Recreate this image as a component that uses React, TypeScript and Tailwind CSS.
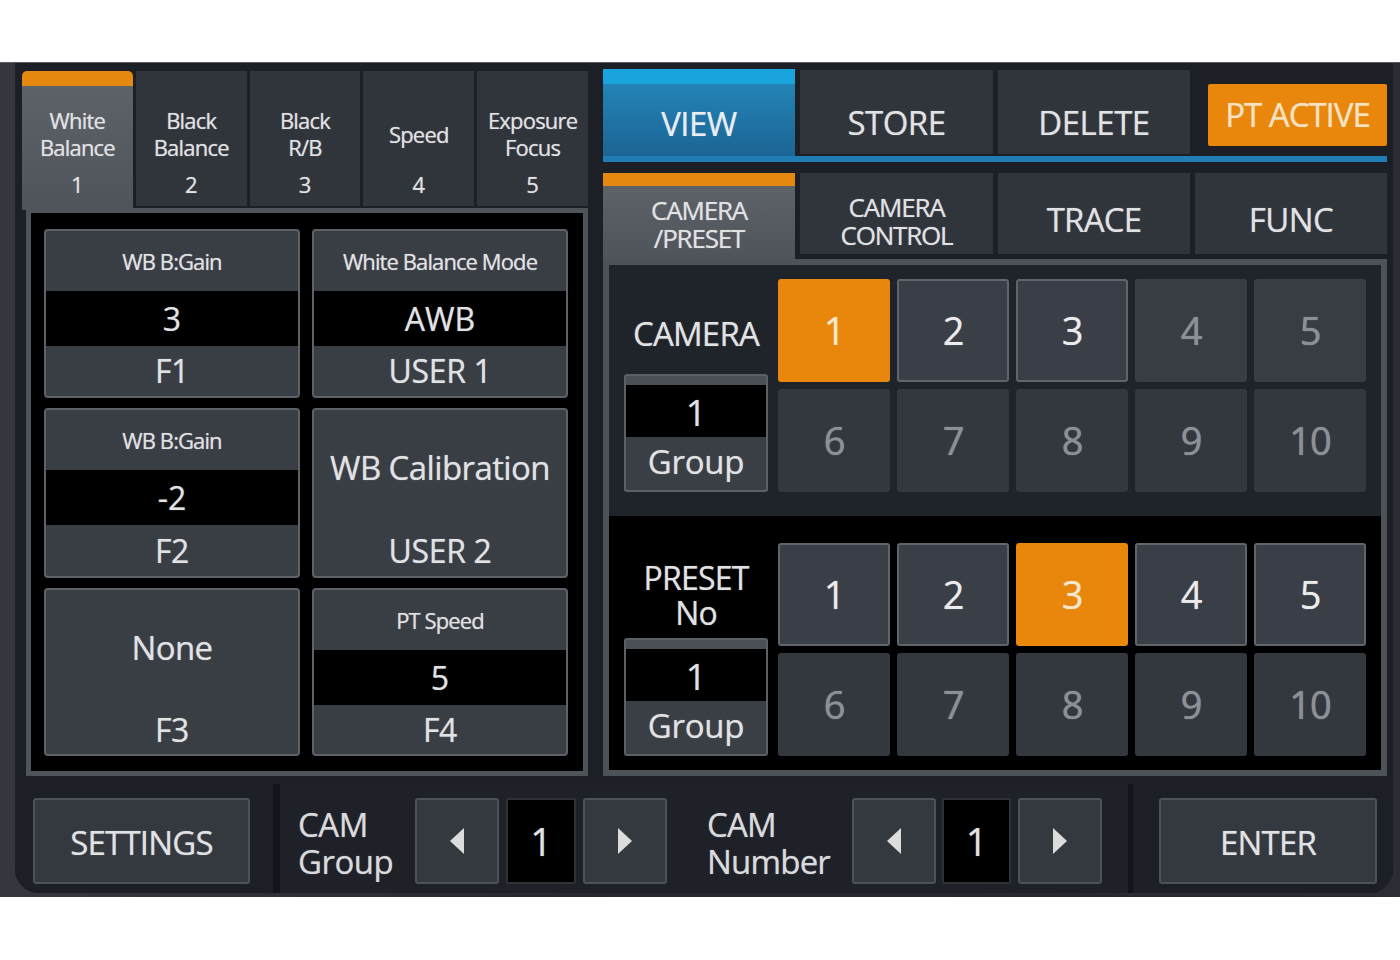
import React from "react";

const leftTabs = [
  { label: ["White", "Balance"], num: "1", active: true },
  { label: ["Black", "Balance"], num: "2" },
  { label: ["Black", "R/B"], num: "3" },
  { label: ["Speed"], num: "4" },
  { label: ["Exposure", "Focus"], num: "5" },
];

type CardData = {
  header?: string;
  value?: string;
  title?: string;
  footer: string;
};

const cards: CardData[] = [
  { header: "WB B:Gain", value: "3", footer: "F1" },
  { header: "White Balance Mode", value: "AWB", footer: "USER 1" },
  { header: "WB B:Gain", value: "-2", footer: "F2" },
  { title: "WB Calibration", footer: "USER 2" },
  { title: "None", footer: "F3" },
  { header: "PT Speed", value: "5", footer: "F4" },
];

function LeftTab({
  label,
  num,
  active,
}: {
  label: string[];
  num: string;
  active?: boolean;
}) {
  return (
    <div className={`flex flex-1 flex-col ${active ? "h-[139px]" : "h-[135px]"}`}>
      <div
        className={`h-[15px] ${
          active ? "rounded-t-[5px] bg-[#e5880f]" : "bg-[#30343b]"
        }`}
      />
      <div
        className={`flex flex-1 flex-col items-center ${
          active
            ? "bg-gradient-to-b from-[#5d6168] to-[#4f535a]"
            : "bg-[#30343b]"
        }`}
      >
        <div className="mt-[15px] flex h-[66px] flex-col items-center justify-center text-[22px] leading-[27px] tracking-[-0.8px]">
          {label.map((l) => (
            <span key={l}>{l}</span>
          ))}
        </div>
        <div className="text-[22px] leading-[34px]">{num}</div>
      </div>
    </div>
  );
}

function Card({ card }: { card: CardData }) {
  return (
    <div className="flex h-full flex-col overflow-hidden rounded-[4px] border-2 border-[#5d6168] bg-[#393d44]">
      {card.header ? (
        <>
          <div className="flex h-[60px] items-center justify-center text-[22px] tracking-[-0.9px]">
            {card.header}
          </div>
          <div className="flex h-[55px] items-center justify-center bg-black text-[32px]">
            {card.value}
          </div>
        </>
      ) : (
        <div className="flex h-[115px] items-center justify-center text-[33px] tracking-[-0.6px]">
          {card.title}
        </div>
      )}
      <div className="flex flex-1 items-center justify-center text-[32px] tracking-[-0.3px]">
        {card.footer}
      </div>
    </div>
  );
}

function GroupBox() {
  return (
    <div className="flex h-[118px] w-[144px] flex-col overflow-hidden rounded-[3px] border-2 border-[#5b6067] bg-[#3a3e45]">
      <div className="h-[13px] bg-[#4a4e55]" />
      <div className="flex h-[52px] items-center justify-center bg-black pt-[4px] text-[36px]">
        1
      </div>
      <div className="flex flex-1 items-center justify-center pb-[4px] text-[33px] tracking-[-0.3px]">
        Group
      </div>
    </div>
  );
}

function NumButton({ n, state }: { n: number; state: "on" | "lit" | "dim" | "off" }) {
  const cls =
    state === "on"
      ? "bg-[#e8870c] text-[#f6e7cf]"
      : state === "lit"
      ? "border-2 border-[#60646b] bg-[#3a3e46] text-[#ececec]"
      : state === "dim"
      ? "border-2 border-[#393d44] bg-[#383c43] text-[#8b9097]"
      : "bg-[#33373e] text-[#8b9097]";
  return (
    <div className={`flex items-center justify-center rounded-[3px] text-[38px] tracking-[-1px] ${cls}`}>
      {n}
    </div>
  );
}

function Arrow({ dir }: { dir: "left" | "right" }) {
  return (
    <div className="flex h-[86px] w-[84px] items-center justify-center rounded-[3px] border-2 border-[#4d5158] bg-[#34383f]">
      <svg width="14" height="26" viewBox="0 0 14 26">
        {dir === "left" ? (
          <polygon points="14,0 14,26 0,13" fill="#dcdcdc" />
        ) : (
          <polygon points="0,0 0,26 14,13" fill="#dcdcdc" />
        )}
      </svg>
    </div>
  );
}

function ValueBox() {
  return (
    <div className="flex h-[86px] items-center justify-center rounded-[2px] border-2 border-[#2e3137] bg-black text-[38px]">
      1
    </div>
  );
}

export default function App() {
  const cam = [1, 2, 3, 4, 5, 6, 7, 8, 9, 10];
  const camState = (n: number) =>
    n === 1 ? "on" : n <= 3 ? "lit" : n <= 5 ? "dim" : "off";
  const preState = (n: number) => (n === 3 ? "on" : n <= 5 ? "lit" : "off");

  return (
    <div className="h-[960px] w-[1400px] bg-white pt-[62px] font-['Open_Sans','Noto_Sans',sans-serif] text-[#e1e2e4] [text-shadow:0_0_1px_rgba(255,255,255,0.55)]">
      <div className="h-[835px] border-t border-[#5a5d62] bg-gradient-to-r from-[#34373d] via-[#24272d] to-[#2a2d33] pb-[4px] pl-[15px] pr-[7px]">
        <div className="flex h-full flex-col rounded-b-[24px] bg-[#1c1f25]">
          {/* top area */}
          <div className="flex pt-[6px] pl-[7px]">
            {/* left section */}
            <div className="mt-[2px] w-[566px]">
              <div className="flex h-[137px] items-start gap-[3px]">
                {leftTabs.map((t) => (
                  <LeftTab key={t.num} {...t} />
                ))}
              </div>
              <div className="relative ml-[4px] h-[568px] border-[5px] border-[#4f535a] bg-black pl-[13px] pt-[16px]">
                <div className="grid grid-cols-[256px_256px] grid-rows-[169px_170px_168px] gap-x-[12px] gap-y-[10px]">
                  {cards.map((c, i) => (
                    <Card key={i} card={c} />
                  ))}
                </div>
              </div>
            </div>

            {/* right section */}
            <div className="ml-[15px] w-[784px]">
              <div className="flex h-[87px] items-start">
                <div className="flex h-[87px] w-[192px] flex-col">
                  <div className="h-[15px] bg-[#1aa4de]" />
                  <div className="flex flex-1 items-center justify-center bg-gradient-to-b from-[#2383b6] to-[#1b6594] pt-[7px] text-[33px] tracking-[-0.5px] text-[#e8eef2]">
                    VIEW
                  </div>
                </div>
                <div className="ml-[5px] mt-[1px] flex h-[84px] w-[193px] items-center justify-center bg-[#30343b] pt-[21px] text-[33px] tracking-[-0.5px]">
                  STORE
                </div>
                <div className="ml-[5px] mt-[1px] flex h-[84px] w-[192px] items-center justify-center bg-[#30343b] pt-[21px] text-[33px] tracking-[-0.5px]">
                  DELETE
                </div>
                <div className="ml-[18px] mt-[15px] flex h-[62px] w-[179px] items-center justify-center rounded-[2px] bg-[#e8870c] text-[33px] tracking-[-1px] text-[#f7e2c2]">
                  PT ACTIVE
                </div>
              </div>
              <div className="h-[6px] bg-[#1f7db3]" />
              <div className="h-[11px]" />
              <div className="flex h-[86px] items-start">
                <div className="flex h-[86px] w-[192px] flex-col">
                  <div className="h-[13px] bg-[#e5880f]" />
                  <div className="flex flex-1 flex-col items-center justify-center bg-gradient-to-b from-[#5d6168] to-[#4f535a] pt-[2px] text-[26px] leading-[28px] tracking-[-1.2px]">
                    <span>CAMERA</span>
                    <span>/PRESET</span>
                  </div>
                </div>
                <div className="ml-[5px] flex h-[81px] w-[193px] flex-col items-center justify-center bg-[#30343b] pt-[15px] text-[26px] leading-[28px] tracking-[-1.2px]">
                  <span>CAMERA</span>
                  <span>CONTROL</span>
                </div>
                <div className="ml-[5px] flex h-[81px] w-[192px] items-center justify-center bg-[#30343b] pt-[13px] text-[33px] tracking-[-0.8px]">
                  TRACE
                </div>
                <div className="ml-[5px] flex h-[81px] w-[192px] items-center justify-center bg-[#30343b] pt-[13px] text-[33px] tracking-[-0.5px]">
                  FUNC
                </div>
              </div>
              <div className="flex h-[517px] flex-col border-[6px] border-[#4d5259] bg-black">
                {/* camera */}
                <div className="flex h-[251px] bg-[#1f232a] pl-[15px] pt-[14px]">
                  <div className="flex w-[144px] flex-col">
                    <div className="flex h-[95px] items-center justify-center pt-[14px] text-[33px] tracking-[-0.8px]">
                      CAMERA
                    </div>
                    <GroupBox />
                  </div>
                  <div className="ml-[10px] grid h-[213px] w-[588px] grid-cols-5 grid-rows-2 gap-[7px]">
                    {cam.map((n) => (
                      <NumButton key={n} n={n} state={camState(n)} />
                    ))}
                  </div>
                </div>
                {/* preset */}
                <div className="flex flex-1 bg-black pl-[15px] pt-[27px]">
                  <div className="flex w-[144px] flex-col">
                    <div className="flex h-[95px] flex-col items-center justify-center pt-[8px] text-[32px] leading-[35px] tracking-[-0.8px]">
                      <span>PRESET</span>
                      <span>No</span>
                    </div>
                    <GroupBox />
                  </div>
                  <div className="ml-[10px] grid h-[213px] w-[588px] grid-cols-5 grid-rows-2 gap-[7px]">
                    {cam.map((n) => (
                      <NumButton key={n} n={n} state={preState(n)} />
                    ))}
                  </div>
                </div>
              </div>
            </div>
          </div>

          {/* bottom bar */}
          <div className="mt-[8px] flex flex-1 overflow-hidden rounded-b-[24px]">
            <div className="w-[258px] bg-[#1c1f25] pl-[18px] pt-[14px]">
              <div className="flex h-[86px] w-[217px] items-center justify-center rounded-[3px] border-2 border-[#4d5158] bg-[#34383f] pt-[4px] text-[33px] tracking-[-0.8px]">
                SETTINGS
              </div>
            </div>
            <div className="w-[7px] bg-[#121419]" />
            <div className="flex w-[848px] items-start bg-[#1e2128] pt-[14px]">
              <div className="ml-[18px] flex h-[86px] w-[117px] flex-col justify-center pt-[4px] text-[33px] leading-[37px] tracking-[-0.5px] text-[#d9dadc]">
                <span>CAM</span>
                <span>Group</span>
              </div>
              <Arrow dir="left" />
              <div className="ml-[7px] w-[70px]">
                <ValueBox />
              </div>
              <div className="ml-[7px]">
                <Arrow dir="right" />
              </div>
              <div className="ml-[40px] flex h-[86px] w-[145px] flex-col justify-center pt-[4px] text-[33px] leading-[37px] tracking-[-0.8px] text-[#d9dadc]">
                <span>CAM</span>
                <span>Number</span>
              </div>
              <Arrow dir="left" />
              <div className="ml-[6px] w-[69px]">
                <ValueBox />
              </div>
              <div className="ml-[7px]">
                <Arrow dir="right" />
              </div>
            </div>
            <div className="w-[5px] bg-[#121419]" />
            <div className="flex-1 bg-[#1c1f25] pl-[26px] pt-[14px]">
              <div className="flex h-[86px] w-[218px] items-center justify-center rounded-[3px] border-2 border-[#4d5158] bg-[#34383f] pt-[4px] text-[33px] tracking-[-0.8px]">
                ENTER
              </div>
            </div>
          </div>
        </div>
      </div>
    </div>
  );
}
